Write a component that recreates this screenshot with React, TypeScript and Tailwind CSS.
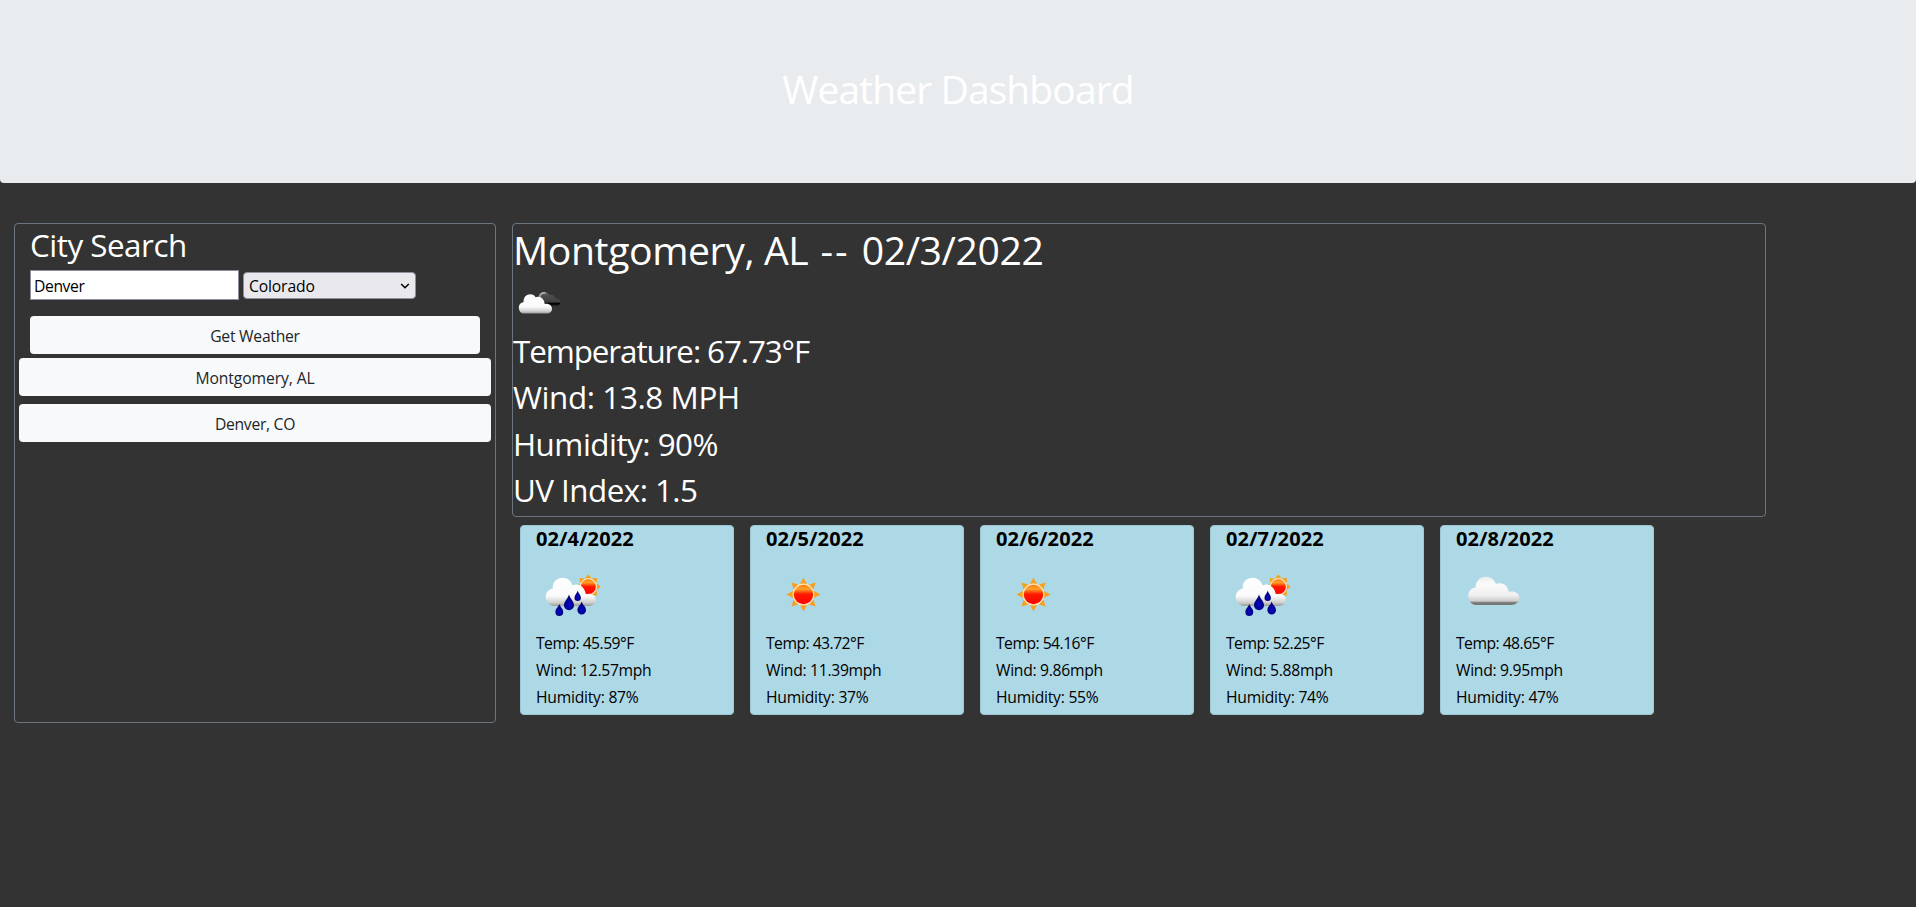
import { useId, type ReactNode } from "react";

type IconName = "rain" | "sun" | "cloud";

interface Day {
  date: string;
  icon: IconName;
  temp: string;
  wind: string;
  humidity: string;
}

const days: Day[] = [
  { date: "02/4/2022", icon: "rain", temp: "45.59", wind: "12.57", humidity: "87" },
  { date: "02/5/2022", icon: "sun", temp: "43.72", wind: "11.39", humidity: "37" },
  { date: "02/6/2022", icon: "sun", temp: "54.16", wind: "9.86", humidity: "55" },
  { date: "02/7/2022", icon: "rain", temp: "52.25", wind: "5.88", humidity: "74" },
  { date: "02/8/2022", icon: "cloud", temp: "48.65", wind: "9.95", humidity: "47" },
];

function Sun({ cx, cy, r, reach, fill }: { cx: number; cy: number; r: number; reach: number; fill: string }) {
  const angles = [0, 45, 90, 135, 180, 225, 270, 315];
  return (
    <g transform={`translate(${cx} ${cy})`}>
      {angles.map((a) => (
        <path key={a} d={`M-3.4 ${-r - 0.8}L0 ${-reach}L3.4 ${-r - 0.8}Z`} fill="#f9a01b" transform={`rotate(${a})`} />
      ))}
      <circle r={r + 1.2} fill="#fde3b4" />
      <circle r={r} fill={fill} />
    </g>
  );
}

function Gradients({ id }: { id: string }) {
  return (
    <defs>
      <linearGradient id={`${id}c`} x1="0" y1="0" x2="0" y2="1">
        <stop offset="0" stopColor="#ececec" />
        <stop offset="0.25" stopColor="#fbfbfb" />
        <stop offset="0.65" stopColor="#f0f0f0" />
        <stop offset="0.86" stopColor="#cccccc" />
        <stop offset="0.92" stopColor="#777777" />
        <stop offset="1" stopColor="#777777" />
      </linearGradient>
      <linearGradient id={`${id}w`} x1="0" y1="0" x2="0" y2="1">
        <stop offset="0" stopColor="#ffffff" />
        <stop offset="0.65" stopColor="#fafafa" />
        <stop offset="0.88" stopColor="#cfcfcf" />
        <stop offset="1" stopColor="#999999" />
      </linearGradient>
      <linearGradient id={`${id}s`} x1="0" y1="0" x2="0" y2="1">
        <stop offset="0" stopColor="#ff7a10" />
        <stop offset="0.22" stopColor="#ffa228" />
        <stop offset="0.48" stopColor="#ff1a00" />
        <stop offset="1" stopColor="#ff0000" />
      </linearGradient>
      <linearGradient id={`${id}d`} x1="0" y1="0" x2="0" y2="1">
        <stop offset="0" stopColor="#707070" />
        <stop offset="0.3" stopColor="#4c4c4c" />
        <stop offset="0.75" stopColor="#404040" />
        <stop offset="0.84" stopColor="#000000" />
        <stop offset="1" stopColor="#111111" />
      </linearGradient>
      <radialGradient id={`${id}r`} cx="0.5" cy="0.65" r="0.6">
        <stop offset="0" stopColor="#0808d0" />
        <stop offset="1" stopColor="#000062" />
      </radialGradient>
    </defs>
  );
}

function WeatherIcon({ name }: { name: IconName }) {
  const id = useId();
  return (
    <svg viewBox="0 0 75 75" className="block size-[75px]">
      <Gradients id={id} />
      {name === "sun" && <Sun cx={37.5} cy={37.5} r={9.7} reach={17} fill={`url(#${id}s)`} />}
      {name === "cloud" && (
        <path
          fill={`url(#${id}c)`}
          d="M20 48C15.500 48 12.300 43.500 12.300 38.500C12.300 34 15.500 31 19.600 30.500C19.300 24.500 24 19.800 29.800 19.800C34.500 19.800 38.300 22.500 39.800 27C46 24.800 52 28.500 52.800 35C58.500 33.500 63.300 36.500 63.300 41C63.300 45 59.500 48 55.500 48Z"
        />
      )}
      {name === "rain" && (
        <>
          <Sun cx={52.3} cy={29.8} r={7.5} reach={12.3} fill={`url(#${id}s)`} />
          <path
            fill={`url(#${id}w)`}
            d="M18 49C13 48.500 9.700 44.500 9.700 40C9.700 35.500 12.800 32 17 31.500C15.500 26 20.500 20.800 26.500 20.800C31.500 20.800 35.300 24 36.500 28.500C42.500 25.500 49 30 49.800 37.500C55 35.500 59.800 38.500 59.800 42.500C59.800 46.500 56.500 49 52.500 49Z"
          />
          <g fill={`url(#${id}r)`}>
            <path d="M23.300 47C24.200 50.200 27.200 51.500 27.200 55A3.900 4 0 0 1 19.400 55C19.400 51.500 22.400 50.200 23.300 47Z" />
            <path d="M33 37.500C34.200 42 38 44 38 48.200A5 5 0 0 1 28 48.200C28 44 31.800 42 33 37.500Z" />
            <path d="M41.700 33.700C42.400 36.500 44.900 37.800 44.900 40.700A3.200 3.200 0 0 1 38.500 40.700C38.500 37.800 41 36.500 41.700 33.700Z" />
            <path d="M45.700 44.500C46.700 48.200 50 49.500 50 53.200A4.300 4.200 0 0 1 41.400 53.200C41.400 49.500 44.700 48.200 45.700 44.500Z" />
          </g>
        </>
      )}
    </svg>
  );
}

function BrokenCloudsIcon() {
  const id = useId();
  return (
    <svg viewBox="0 0 50 50" className="block size-[50px]">
      <Gradients id={id} />
      <path
        fill={`url(#${id}d)`}
        d="M24.500 20C24.500 16 27.500 13 31 13C33.800 13 35.500 14.300 36.500 16.200C39.800 15.600 42.300 17.200 42.800 19.800C45.800 19.400 47.500 21 47.500 23.200C47.500 25.200 46 26.400 44.500 26.400L29 26.400Z"
      />
      <path d="M26.500 18.500C27 15.500 29 13.500 32.500 13.800" fill="none" stroke="#b5b5b5" strokeWidth="1.400" />
      <path
        fill={`url(#${id}w)`}
        d="M10.500 34.500C7.500 34.200 5.800 31.200 5.800 28.400C5.800 25.400 7.800 23.400 10.600 22.900C10.300 18.400 13.300 15.300 17.300 15.300C19.800 15.300 21.600 16.400 22.600 18.200C26.500 16.400 31.500 19.400 31.600 24.800C35.800 24 39 26.500 39 29.700C39 32.500 36.800 34.500 34 34.500Z"
      />
    </svg>
  );
}

function LightButton({ children }: { children: ReactNode }) {
  return (
    <button className="flex h-[38px] w-full shrink-0 items-center justify-center rounded-[4px] bg-[#f8f9fa] pt-[2px] text-[15.7px] leading-6 text-[#212529]">
      {children}
    </button>
  );
}

export default function App() {
  return (
    <div className="min-h-screen bg-[#333333] font-['Open_Sans','Noto_Sans',sans-serif] text-base leading-6 text-white">
      <header className="flex h-[183px] justify-center rounded-b-[4px] bg-[#e8ecef] pt-[65px]">
        <h1 className="text-[39px] leading-[48px] tracking-[-0.9px]">Weather Dashboard</h1>
      </header>

      <main className="flex items-start pt-10 pl-3.5">
        <aside className="h-[500px] w-[482px] shrink-0 rounded-[4px] border border-[#6c757d] px-[4px]">
          <div className="px-[11px] pt-[2px]">
            <h2 className="text-[31.4px] leading-[38px] tracking-[-0.5px]">City Search</h2>
            <div className="flex items-center gap-1 pt-[6px]">
              <input
                defaultValue="Denver"
                className="h-[30px] w-[209px] border border-[#8f8f9d] bg-white pt-[2px] pr-1 pl-[3px] text-[15.7px] tracking-[-0.4px] text-black outline-none"
              />
              <div className="flex h-[27px] w-[173px] items-center justify-between rounded-[4px] border border-[#8f8f9d] bg-[#e9e9ed] pr-[5px] pl-[5px] text-black">
                <span className="pt-[2px] text-[15.7px] tracking-[-0.15px]">Colorado</span>
                <svg viewBox="0 0 10 8" className="mt-px h-2 w-2.5">
                  <path d="M1.200 2L5 5.700L8.800 2" fill="none" stroke="currentColor" strokeWidth="1.600" />
                </svg>
              </div>
            </div>
            <div className="pt-4">
              <LightButton>
                <span className="tracking-[-0.25px]">Get Weather</span>
              </LightButton>
            </div>
          </div>
          <div className="flex flex-col gap-2 pt-1">
            <LightButton>
              <span className="tracking-[-0.1px]">Montgomery, AL</span>
            </LightButton>
            <LightButton>
              <span className="tracking-[-0.3px]">Denver, CO</span>
            </LightButton>
          </div>
        </aside>

        <div className="ml-4">
          <section className="h-[294px] w-[1254px] rounded-[4px] border border-[#6c757d]">
            <h1 className="text-[39.2px] leading-[52px] tracking-[-0.42px]">
              Montgomery, AL<span className="tracking-[1.95px]"> -- </span>02/3/2022
            </h1>
            <div className="h-[52px] pt-[3px]">
              <BrokenCloudsIcon />
            </div>
            <div className="flex flex-col text-[31.4px] leading-[46.4px]">
              <p className="tracking-[-1.1px]">Temperature: 67.73°F</p>
              <p className="tracking-[-0.4px]">Wind: 13.8 MPH</p>
              <p className="tracking-[-0.52px]">Humidity: 90%</p>
              <p className="tracking-[-0.55px]">UV Index: 1.5</p>
            </div>
          </section>

          <div className="flex gap-4 px-2 pt-2">
            {days.map((d) => (
              <article
                key={d.date}
                className="h-[190px] w-[214px] rounded-[4px] border border-[#9fc7d3] bg-[#add8e6] px-[15px] text-black"
              >
                <h5 className="text-xl leading-[25px] font-bold tracking-[0.15px]">{d.date}</h5>
                <div className="h-[79px] pt-[6px]">
                  <WeatherIcon name={d.icon} />
                </div>
                <div className="flex flex-col text-[15.7px] leading-[27px]">
                  <p className="tracking-[-0.52px]">Temp: {d.temp}°F</p>
                  <p className="tracking-[-0.3px]">Wind: {d.wind}mph</p>
                  <p className="tracking-[-0.25px]">Humidity: {d.humidity}%</p>
                </div>
              </article>
            ))}
          </div>
        </div>
      </main>
    </div>
  );
}
